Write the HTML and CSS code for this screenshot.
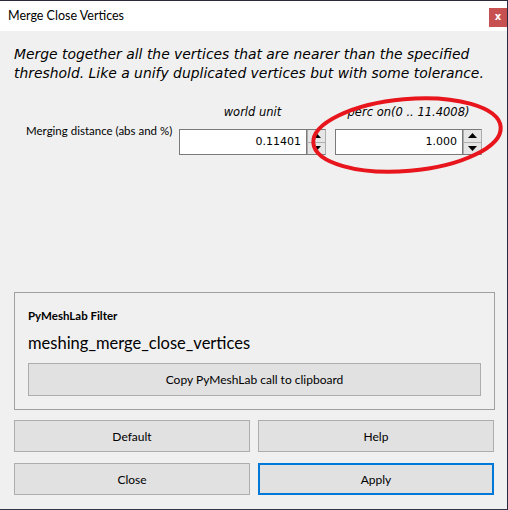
FILE: index.html
```html
<!DOCTYPE html>
<html>
<head>
<meta charset="utf-8">
<link rel="stylesheet" href="styles.css">
</head>
<body>
<div class="window">
  <div class="titlebar">
    <span class="title">Merge Close Vertices</span>
    <span class="close-btn">x</span>
  </div>
  <div class="content">
    <p class="desc">Merge together all the vertices that are nearer than the specified threshold. Like a unify duplicated vertices but with some tolerance.</p>
    <div class="param">
      <div class="param-label">Merging distance (abs and %)</div>
      <div class="field">
        <div class="field-head">world unit</div>
        <div class="spinbox">
          <div class="spin-input">0.11401</div>
          <div class="spin-btns">
            <span class="spin-btn"><svg width="9" height="5" viewBox="0 0 9 5"><path d="M0 5 L4.5 0 L9 5 Z" fill="#000"/></svg></span>
            <span class="spin-btn"><svg width="9" height="5" viewBox="0 0 9 5"><path d="M0 0 L4.5 5 L9 0 Z" fill="#000"/></svg></span>
          </div>
        </div>
      </div>
      <div class="field">
        <div class="field-head">perc on(0 .. 11.4008)</div>
        <div class="spinbox">
          <div class="spin-input">1.000</div>
          <div class="spin-btns">
            <span class="spin-btn"><svg width="9" height="5" viewBox="0 0 9 5"><path d="M0 5 L4.5 0 L9 5 Z" fill="#000"/></svg></span>
            <span class="spin-btn"><svg width="9" height="5" viewBox="0 0 9 5"><path d="M0 0 L4.5 5 L9 0 Z" fill="#000"/></svg></span>
          </div>
        </div>
      </div>
      <svg class="annotation" width="220" height="90" viewBox="0 0 220 90">
        <ellipse cx="110" cy="45" rx="94" ry="36" transform="rotate(-5 110 45)" fill="none" stroke="#e8151d" stroke-width="4"/>
      </svg>
    </div>
    <div class="spacer"></div>
    <div class="groupbox">
      <div class="group-title">PyMeshLab Filter</div>
      <div class="filter-name">meshing_merge_close_vertices</div>
      <div class="btn copy-btn">Copy PyMeshLab call to clipboard</div>
    </div>
    <div class="buttons">
      <div class="btn">Default</div>
      <div class="btn">Help</div>
      <div class="btn">Close</div>
      <div class="btn btn-default">Apply</div>
    </div>
  </div>
</div>
</body>
</html>
```
FILE: styles.css
```css
html, body {
  margin: 0;
  padding: 0;
  background: #f0f0f0;
}
.window {
  width: 508px;
  height: 510px;
  box-sizing: border-box;
  border-top: 1px solid #2a2a36;
  border-right: 1px solid #2a2a40;
  border-bottom: 1px solid #33334a;
  background: #f0f0f0;
  display: flex;
  flex-direction: column;
  font-family: Lato, "Noto Sans", sans-serif;
  color: #000;
}
.titlebar {
  height: 30px;
  flex: none;
  background: #fff;
  display: flex;
  align-items: flex-start;
  justify-content: space-between;
}
.title {
  margin: 7px 0 0 8px;
  font-size: 12.5px;
  line-height: 16px;
}
.close-btn {
  margin-top: 7px;
  width: 18px;
  height: 19px;
  background: #c75050;
  color: #fff;
  font-family: "DejaVu Sans", sans-serif;
  font-weight: bold;
  font-size: 10px;
  line-height: 18px;
  text-align: center;
}
.content {
  flex: 1;
  display: flex;
  flex-direction: column;
  padding: 0 12px 14px 14px;
}
.desc {
  margin: 14px 0 0 0;
  font-family: "DejaVu Sans", sans-serif;
  font-style: italic;
  font-size: 13.9px;
  line-height: 19px;
}
.param {
  position: relative;
  display: flex;
  align-items: flex-end;
  margin-top: 21px;
}
.param-label {
  width: 153px;
  padding-left: 12px;
  align-self: flex-start;
  margin-top: 19px;
  font-size: 11.5px;
  line-height: 16px;
}
.field {
  width: 147px;
  margin-right: 9px;
  display: flex;
  flex-direction: column;
}
.field-head {
  font-family: "DejaVu Sans", sans-serif;
  font-style: italic;
  font-size: 11.5px;
  line-height: 16px;
  text-align: center;
  margin-bottom: 9px;
}
.spinbox {
  display: flex;
  height: 26px;
}
.spin-input {
  flex: 1;
  box-sizing: border-box;
  background: #fff;
  border: 1px solid #7a7a7a;
  font-family: "DejaVu Sans", sans-serif;
  font-size: 11px;
  line-height: 24px;
  text-align: right;
  padding-right: 5px;
}
.spin-btns {
  width: 19px;
  display: flex;
  flex-direction: column;
  border-top: 1px solid #7a7a7a;
  border-bottom: 1px solid #7a7a7a;
  border-right: 1px solid #adadad;
  box-sizing: border-box;
}
.spin-btn {
  flex: 1;
  display: flex;
  align-items: center;
  justify-content: center;
  background: #e5e5e5;
  border: 1px solid #adadad;
  border-top-width: 0;
  border-right-width: 0;
}
.spin-btn:last-child {
  border-bottom-width: 0;
}
.annotation {
  position: absolute;
  left: 283px;
  top: -14px;
  pointer-events: none;
}
.spacer {
  flex: 1;
}
.groupbox {
  height: 118px;
  box-sizing: border-box;
  border: 1px solid #a0a0a0;
  padding: 15px 13px 13px 13px;
  display: flex;
  flex-direction: column;
}
.group-title {
  font-size: 11.5px;
  font-weight: bold;
  line-height: 16px;
}
.filter-name {
  font-size: 16.5px;
  line-height: 22px;
  margin-top: 8px;
  margin-bottom: 9px;
}
.btn {
  box-sizing: border-box;
  height: 32px;
  background: #e1e1e1;
  border: 1px solid #adadad;
  display: flex;
  align-items: center;
  justify-content: center;
  font-size: 12px;
}
.copy-btn {
  height: 33px;
}
.buttons {
  margin-top: 10px;
  display: grid;
  grid-template-columns: 236px 236px;
  column-gap: 8px;
  row-gap: 11px;
}
.btn-default {
  border: 2px solid #0078d7;
}
```
